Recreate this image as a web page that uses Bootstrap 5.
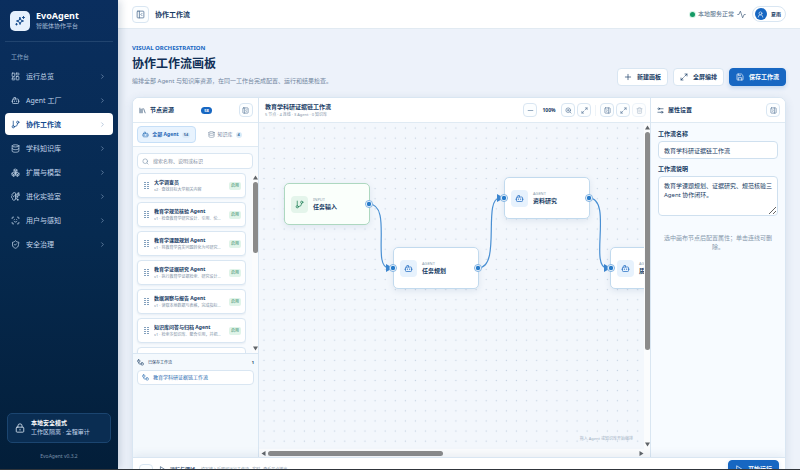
<!DOCTYPE html>
<html lang="zh-CN">
<head>
<meta charset="utf-8">
<meta name="viewport" content="width=device-width, initial-scale=1">
<title>EvoAgent 协作工作流</title>
<link href="https://cdn.jsdelivr.net/npm/bootstrap@5.3.0/dist/css/bootstrap.min.css" rel="stylesheet">
<style>
:root{--ink:#173b63;--muted:#71869f;--line:#d9e6f2;--blue:#1767c2}
body{font-family:"Noto Sans","Noto Sans CJK SC",sans-serif;font-size:6px;line-height:9px;color:var(--ink);background:#edf2fa}
button,input,textarea{font:inherit;color:inherit}
svg.ico{width:9px;height:9px;fill:none;stroke:currentColor;stroke-width:2;stroke-linecap:round;stroke-linejoin:round;flex:none}
svg.ico-s{width:7px;height:7px}
.shell{height:100vh;border-bottom:1px solid #30353b}
.side{width:118px;background:linear-gradient(#0a2e5e,#062a50 50%,#031e39);color:#c3d5ea;padding:10px 5px 8px;box-shadow:2px 0 8px #17375f33;z-index:2}
.brand{padding:0 5px 10px;border-bottom:1px solid #21446f;gap:6px}
.logo{width:20px;height:20px;border-radius:5px;background:#e6f1fd;color:#134a8c}
.logo svg.ico{width:12px;height:12px}
.brand-name{font-size:9px;line-height:12px;color:#fff}
.brand-sub{color:#a5bbd6}
.side-cap{padding:11px 6px 3px;color:#8ca7c6}
.menu{gap:2px}
.menu a{height:22px;padding:0 7px 0 6px;gap:6px;border-radius:4px;font-size:7px;color:#c3d5ea}
.menu a.active{background:#fff;color:#124b8f;font-weight:700}
.menu a .ico-s{color:#8fa9c8}
.safe{margin:0 2px;padding:5px 7px;gap:6px;border:1px solid #1b4570;border-radius:5px;background:#0a2d52}
.safe strong{color:#fff}
.safe svg.ico{width:10px;height:10px;color:#d7e4f2}
.ver{font-size:5px;color:#7890ab;padding-top:9px}
.topbar{height:29px;background:#fff;border-bottom:1px solid #e1eaf2;padding:0 14px;gap:6px}
.status{gap:3px;color:#526b87}
.sq{width:14px;height:14px;padding:0;border:1px solid var(--line);border-radius:4px;background:#fcfeff;color:#4b6c90;display:flex;align-items:center;justify-content:center;flex:none}
.sq svg.ico{width:7px;height:7px}
.sq-lg{width:17px;height:17px}
.sq-lg svg.ico{width:9px;height:9px}
.sq:disabled{opacity:.45}
.crumb{font-size:7px}
.online{width:5px;height:5px;border-radius:50%;background:#159a65;box-shadow:0 0 0 1px #d3f1e4}
.user{height:16px;padding:0 4px 0 2px;border:1px solid var(--line);border-radius:8px;background:#fff;font-size:5px}
.avatar{width:12px;height:12px;border-radius:50%;background:var(--blue);color:#fff}
.content{padding:15px 14px 0}
.eyebrow{color:var(--blue);font-weight:700}
h1.page-title{font-size:12px;line-height:16px;font-weight:700;margin:3px 0 5px;color:#102f56}
.sub{color:var(--muted)}
.acts{gap:5px}
.act{height:18px;padding:0 6px;border:1px solid var(--line);border-radius:4px;background:#fff;font-weight:700;display:flex;align-items:center;gap:5px;color:var(--ink)}
.act svg.ico{width:8px;height:8px}
.act-main{background:var(--blue);border-color:var(--blue);color:#fff;box-shadow:0 2px 4px #1767c233}
.work{margin-top:11px;border:1px solid var(--line);border-radius:7px 7px 0 0;background:#fff;box-shadow:0 2px 10px #26527e1f;overflow:hidden}
.stage{height:359px}
.left{width:126px;border-right:1px solid var(--line);background:#f8fbfe}
.right{width:135px;border-left:1px solid var(--line);background:#f7fbff}
.phead{height:25px;border-bottom:1px solid #dfeaf3;background:#fff;padding:0 5px 0 6px;flex:none}
.count{font-size:4px;line-height:7px;width:11px;border-radius:4px;background:var(--blue);color:#fff;text-align:center;font-weight:700}
.tabs{padding:3px 4px;border-bottom:1px solid #dfeaf3;background:#fff}
.tabs button{height:17px;font-size:5px;border:1px solid transparent;border-radius:4px;background:none;color:var(--muted);padding:0;gap:3px}
.tabs button.on{background:#e8f3fe;border-color:#c6dff7;color:#1c65b4;font-weight:700}
.pill{font-size:4px;line-height:6px;padding:0 2px;border-radius:3px;background:#dcebf8;font-weight:700;color:#3a6b9e}
.find{margin:6px 5px 4px 4px;height:18px;border:1px solid var(--line);border-radius:4px;background:#fff;padding:0 4px;gap:4px;color:#7990a9}
.find input{border:0;outline:0;background:none;padding:0;min-width:0;font-size:5px}
.find input::placeholder{color:#7f8d9e;opacity:1}
.list{min-height:0;overflow:hidden;gap:6px}
.cards{padding-left:4px;gap:4px;overflow:hidden}
.agent{height:25px;flex:none;border:1px solid var(--line);border-radius:4px;background:#fff;padding:0 4px 0 6px;gap:5px;box-shadow:0 1px 2px #26527e14}
.grip{width:5px;height:7px;fill:#83a0bd;flex:none}
.agent b{font-size:5px;line-height:8px;display:block}
.agent small{font-size:4px;line-height:7px;display:block;color:#8192a6}
.ok{font-size:4px;line-height:8px;padding:0 2px;border-radius:2px;background:#e0f4e9;color:#2c8360;flex:none}
.bar-v{width:6px;flex:none;background:#fbfcfd;padding:2px 0;gap:2px;align-items:center}
.bar-h{height:8px;flex:none;background:#fbfcfd;padding:0 2px;gap:2px}
.bar-v i,.bar-h i{background:#8b8b8b;border-radius:3px}
.bar-v i{width:5px}.bar-h i{height:5px}
.bar-v svg,.bar-h svg{width:5px;height:5px;fill:#606468}
.thumb-list{height:71px}.thumb-y{height:218px}.thumb-x{width:175px}
.saved{border-top:1px solid var(--line);padding:4px 4px 0;height:104px;flex:none;font-size:4px;background:#f4f9fd}
.saved a{height:15px;margin-top:3px;border:1px solid var(--line);border-radius:4px;background:#fff;padding:0 4px;gap:4px;font-size:5px;color:#286ab0}
.mid{min-width:0}
.mid .phead{padding:0 4px 0 6px}
.flow-name{font-size:6px;line-height:8px;font-weight:700}
.flow-meta{font-size:4px;line-height:7px;color:#8495a8}
.tools{gap:2px}
.tools .vr{height:11px;align-self:center;margin:0 2px;background:#bfd2e4}
.zoomv{width:20px;font-size:5px;text-align:center;font-weight:700}
.canvas{background:#f3f7fc;position:relative;overflow:hidden;min-width:0}
.canvas>svg{position:absolute;inset:0;width:100%;height:100%}
.node{position:absolute;width:86px;height:42px;border:1px solid #c2daee;border-radius:5px;background:#fff;padding:0 6px;gap:5px;box-shadow:0 2px 6px #26527e1a}
.node-in{border-color:#add8c0;background:#fafffb}
.nico{width:17px;height:17px;border-radius:4px;background:#e7f2fd;color:#2a72c4;flex:none}
.node-in .nico{background:#e4f5eb;color:#238159}
.node span{font-size:4px;line-height:6px;display:block;color:#8b9bad}
.node b{line-height:9px;display:block;white-space:nowrap}
.n1{left:25px;top:60px}.n2{left:134px;top:124px}.n3{left:245px;top:54px}.n4{left:351px;top:124px}
.hint{position:absolute;right:11px;bottom:7px;font-size:4px;line-height:7px;color:#9fb1c4}
.props{padding:7px 7px 0}
.props label{font-weight:700;display:block;line-height:9px;margin-bottom:2px}
.props .field{display:block;width:100%;border:1px solid #cfe0ef;border-radius:4px;background:#fff;padding:0 5px}
.props input.field{height:18px;margin-bottom:6px}
.props textarea.field{height:40px;padding:5px;line-height:9px;resize:vertical}
.tip{margin:18px 3px 0;text-align:center;color:#8698ac}
.dock{height:34px;border-top:1px solid var(--line);padding:2px 6px;background:#fff;box-shadow:0 -3px 8px #26527e14;position:relative}
.dock strong{font-size:5px}
.dock small{font-size:4px;color:#8293a6;padding-left:2px}
.dock-info{padding:5px 0 0 2px}
</style>
<script src="https://cdn.jsdelivr.net/npm/bootstrap@5.3.0/dist/js/bootstrap.bundle.min.js"></script>
</head>
<body>
<svg class="d-none" xmlns="http://www.w3.org/2000/svg">
<symbol id="spark" viewBox="0 0 24 24"><path d="M12 5l1.8 5.2L19 12l-5.2 1.8L12 19l-1.8-5.2L5 12l5.2-1.8zM19 3v4M17 5h4M5 17v3M3.500 18.500h3"/></symbol>
<symbol id="dash" viewBox="0 0 24 24"><rect x="3" y="3" width="7" height="9" rx="1"/><rect x="14" y="3" width="7" height="5" rx="1"/><rect x="14" y="12" width="7" height="9" rx="1"/><rect x="3" y="16" width="7" height="5" rx="1"/></symbol>
<symbol id="bot" viewBox="0 0 24 24"><path d="M12 8V4H8M2 14h2M20 14h2M15 13v2M9 13v2"/><rect x="4" y="8" width="16" height="12" rx="2"/></symbol>
<symbol id="branch" viewBox="0 0 24 24"><path d="M6 3v12M18 9a9 9 0 0 1-9 9"/><circle cx="18" cy="6" r="3"/><circle cx="6" cy="18" r="3"/></symbol>
<symbol id="db" viewBox="0 0 24 24"><ellipse cx="12" cy="5" rx="9" ry="3"/><path d="M3 5v14c0 1.700 4 3 9 3s9-1.300 9-3V5M3 12c0 1.700 4 3 9 3s9-1.300 9-3"/></symbol>
<symbol id="boxes" viewBox="0 0 24 24"><path d="M12 3l4 2.300v4.700l-4 2.300-4-2.300V5.300zM7 12l4.500 2.500v5L7 22l-4.500-2.500v-5zM17 12l4.500 2.500v5L17 22l-4.500-2.500v-5zM8 5.500l4 2 4-2M12 8v4M2.500 14.500L7 17l4.500-2.500M12.500 14.500L17 17l4.500-2.500M7 17v5M17 17v5"/></symbol>
<symbol id="brain" viewBox="0 0 24 24"><path d="M12 4a3 3 0 0 0-6 0 4 4 0 0 0-3 6 4 4 0 0 0 1 7 4 4 0 0 0 8 2zM12 13h4M12 18h4a2 2 0 0 1 2 2M12 8h8M16 8V5a2 2 0 0 1 2-2M9 10a4 4 0 0 1-3 3"/><circle cx="17" cy="13" r="1"/><circle cx="20" cy="3" r="1"/><circle cx="21" cy="8" r="1"/><circle cx="18" cy="21" r="1"/></symbol>
<symbol id="face" viewBox="0 0 24 24"><path d="M3 7V5a2 2 0 0 1 2-2h2M17 3h2a2 2 0 0 1 2 2v2M21 17v2a2 2 0 0 1-2 2h-2M7 21H5a2 2 0 0 1-2-2v-2M8 14s1.500 2 4 2 4-2 4-2M9 9v.1M15 9v.1"/></symbol>
<symbol id="shield" viewBox="0 0 24 24"><path d="M20 13c0 5-3.500 7.500-8 9-4.500-1.500-8-4-8-9V6c3 0 6-2 8-4 2 2 5 4 8 4zM9 12l2 2 4-4"/></symbol>
<symbol id="chev" viewBox="0 0 24 24"><path d="M9 18l6-6-6-6"/></symbol>
<symbol id="lock" viewBox="0 0 24 24"><rect x="3" y="10" width="18" height="12" rx="2"/><path d="M7 10V7a5 5 0 0 1 10 0v3M12 15v2"/></symbol>
<symbol id="pl" viewBox="0 0 24 24"><rect x="3" y="3" width="18" height="18" rx="2"/><path d="M9 3v18M16 15l-3-3 3-3"/></symbol>
<symbol id="pr" viewBox="0 0 24 24"><rect x="3" y="3" width="18" height="18" rx="2"/><path d="M15 3v18M8 9l3 3-3 3"/></symbol>
<symbol id="pulse" viewBox="0 0 24 24"><path d="M2 12h3l4-9 6 18 4-9h3"/></symbol>
<symbol id="person" viewBox="0 0 24 24"><circle cx="12" cy="8" r="5"/><path d="M4 21a8 8 0 0 1 16 0"/></symbol>
<symbol id="plus" viewBox="0 0 24 24"><path d="M4 12h16M12 4v16"/></symbol>
<symbol id="minus" viewBox="0 0 24 24"><path d="M4 12h16"/></symbol>
<symbol id="max" viewBox="0 0 24 24"><path d="M15 3h6v6M21 3l-7 7M3 21l7-7M9 21H3v-6"/></symbol>
<symbol id="save" viewBox="0 0 24 24"><path d="M15 3H5a2 2 0 0 0-2 2v14a2 2 0 0 0 2 2h14a2 2 0 0 0 2-2V9zM17 21v-7H7v7M7 3v5h7"/></symbol>
<symbol id="lib" viewBox="0 0 24 24"><path d="M16 6l5 14M11 6v14M7 8v12M3 4v16"/></symbol>
<symbol id="find" viewBox="0 0 24 24"><circle cx="11" cy="11" r="8"/><path d="M21 21l-4-4"/></symbol>
<symbol id="zin" viewBox="0 0 24 24"><circle cx="11" cy="11" r="8"/><path d="M21 21l-4-4M11 8v6M8 11h6"/></symbol>
<symbol id="trash" viewBox="0 0 24 24"><path d="M3 6h18M19 6v14a2 2 0 0 1-2 2H7a2 2 0 0 1-2-2V6M8 6V4a2 2 0 0 1 2-2h4a2 2 0 0 1 2 2v2M10 11v6M14 11v6"/></symbol>
<symbol id="set" viewBox="0 0 24 24"><path d="M10 6h11M3 18h10"/><circle cx="6" cy="6" r="3"/><circle cx="17" cy="18" r="3"/></symbol>
<symbol id="wf" viewBox="0 0 24 24"><rect x="2" y="3" width="8" height="8" rx="3"/><rect x="14" y="13" width="8" height="8" rx="3"/><path d="M6 11v4a2 2 0 0 0 2 2h6"/></symbol>
<symbol id="play" viewBox="0 0 24 24"><path d="M6 3l14 9-14 9z"/></symbol>
<symbol id="up" viewBox="0 0 24 24"><path d="M5 15l7-7 7 7"/></symbol>
<symbol id="grip" viewBox="0 0 5 7"><path d="M0 0h2v1H0zM3 0h2v1H3zM0 2h2v1H0zM3 2h2v1H3zM0 4h2v1H0zM3 4h2v1H3zM0 6h2v1H0zM3 6h2v1H3z"/></symbol>
<symbol id="tu" viewBox="0 0 10 10"><path d="M5 1l5 8H0z"/></symbol>
<symbol id="td" viewBox="0 0 10 10"><path d="M5 9l5-8H0z"/></symbol>
<symbol id="tl" viewBox="0 0 10 10"><path d="M1 5l8-5v10z"/></symbol>
<symbol id="tr" viewBox="0 0 10 10"><path d="M9 5L1 0v10z"/></symbol>
</svg>
<div class="shell d-flex overflow-hidden">
<aside class="side d-flex flex-column flex-shrink-0">
  <div class="brand d-flex align-items-center">
    <div class="logo d-flex align-items-center justify-content-center"><svg class="ico"><use href="#spark"/></svg></div>
    <div><div class="brand-name fw-bold">EvoAgent</div><div class="brand-sub">智能体协作平台</div></div>
  </div>
  <div class="side-cap">工作台</div>
  <nav class="menu d-flex flex-column">
    <a href="#" class="d-flex align-items-center text-decoration-none"><svg class="ico"><use href="#dash"/></svg><span class="flex-grow-1">运行总览</span><svg class="ico ico-s"><use href="#chev"/></svg></a>
    <a href="#" class="d-flex align-items-center text-decoration-none"><svg class="ico"><use href="#bot"/></svg><span class="flex-grow-1">Agent 工厂</span><svg class="ico ico-s"><use href="#chev"/></svg></a>
    <a href="#" class="active d-flex align-items-center text-decoration-none" aria-current="page"><svg class="ico"><use href="#branch"/></svg><span class="flex-grow-1">协作工作流</span><svg class="ico ico-s"><use href="#chev"/></svg></a>
    <a href="#" class="d-flex align-items-center text-decoration-none"><svg class="ico"><use href="#db"/></svg><span class="flex-grow-1">学科知识库</span><svg class="ico ico-s"><use href="#chev"/></svg></a>
    <a href="#" class="d-flex align-items-center text-decoration-none"><svg class="ico"><use href="#boxes"/></svg><span class="flex-grow-1">扩展与模型</span><svg class="ico ico-s"><use href="#chev"/></svg></a>
    <a href="#" class="d-flex align-items-center text-decoration-none"><svg class="ico"><use href="#brain"/></svg><span class="flex-grow-1">进化实验室</span><svg class="ico ico-s"><use href="#chev"/></svg></a>
    <a href="#" class="d-flex align-items-center text-decoration-none"><svg class="ico"><use href="#face"/></svg><span class="flex-grow-1">用户与感知</span><svg class="ico ico-s"><use href="#chev"/></svg></a>
    <a href="#" class="d-flex align-items-center text-decoration-none"><svg class="ico"><use href="#shield"/></svg><span class="flex-grow-1">安全治理</span><svg class="ico ico-s"><use href="#chev"/></svg></a>
  </nav>
  <div class="mt-auto">
    <div class="safe d-flex align-items-center"><svg class="ico"><use href="#lock"/></svg><div><strong class="d-block">本地安全模式</strong><span>工作区隔离 · 全程审计</span></div></div>
    <div class="ver text-center">EvoAgent v0.3.2</div>
  </div>
</aside>
<div class="flex-grow-1 d-flex flex-column overflow-hidden">
  <header class="topbar d-flex align-items-center flex-shrink-0">
    <button class="sq sq-lg" type="button" aria-label="收起导航"><svg class="ico"><use href="#pl"/></svg></button>
    <strong class="crumb">协作工作流</strong>
    <div class="status ms-auto d-flex align-items-center"><span class="online"></span><span>本地服务正常</span><svg class="ico"><use href="#pulse"/></svg></div>
    <button type="button" class="user d-flex align-items-center gap-1"><span class="avatar d-flex align-items-center justify-content-center"><svg class="ico ico-s"><use href="#person"/></svg></span><b>夏雨</b></button>
  </header>
  <main class="content">
    <div class="d-flex align-items-end justify-content-between">
      <div><div class="eyebrow">VISUAL ORCHESTRATION</div><h1 class="page-title">协作工作流画板</h1><div class="sub">编排全部 Agent 与知识库资源，在同一工作台完成配置、运行和结果检查。</div></div>
      <div class="acts d-flex">
        <button type="button" class="act"><svg class="ico"><use href="#plus"/></svg>新建画板</button>
        <button type="button" class="act"><svg class="ico"><use href="#max"/></svg>全屏编排</button>
        <button type="button" class="act act-main"><svg class="ico"><use href="#save"/></svg>保存工作流</button>
      </div>
    </div>
    <section class="work">
      <div class="stage d-flex">
        <div class="left d-flex flex-column flex-shrink-0">
          <div class="phead d-flex align-items-center gap-1"><svg class="ico ico-s"><use href="#lib"/></svg><strong>节点资源</strong><span class="count mx-auto">58</span><button type="button" class="sq" aria-label="收起资源"><svg class="ico"><use href="#pl"/></svg></button></div>
          <div class="tabs d-flex">
            <button type="button" class="on w-50 d-flex align-items-center justify-content-center"><svg class="ico ico-s"><use href="#bot"/></svg>全部 Agent<span class="pill">54</span></button>
            <button type="button" class="w-50 d-flex align-items-center justify-content-center"><svg class="ico ico-s"><use href="#db"/></svg>知识库<span class="pill">4</span></button>
          </div>
          <label class="find d-flex align-items-center"><svg class="ico ico-s"><use href="#find"/></svg><input class="flex-grow-1" type="search" placeholder="搜索名称、说明或标识" aria-label="搜索节点"></label>
          <div class="list d-flex flex-grow-1">
            <div class="cards d-flex flex-column flex-grow-1">
              <div class="agent d-flex align-items-center"><svg class="grip"><use href="#grip"/></svg><div class="flex-grow-1 overflow-hidden"><b class="text-truncate">大学调查员</b><small class="text-truncate">v2 · 查找目标大学相关内容</small></div><span class="ok">启用</span></div>
              <div class="agent d-flex align-items-center"><svg class="grip"><use href="#grip"/></svg><div class="flex-grow-1 overflow-hidden"><b class="text-truncate">教育学规范核验 Agent</b><small class="text-truncate">v1 · 检查教育学研究设计、引用、伦理…</small></div><span class="ok">启用</span></div>
              <div class="agent d-flex align-items-center"><svg class="grip"><use href="#grip"/></svg><div class="flex-grow-1 overflow-hidden"><b class="text-truncate">教育学课题规划 Agent</b><small class="text-truncate">v1 · 将教育学真实问题转化为可研究、…</small></div><span class="ok">启用</span></div>
              <div class="agent d-flex align-items-center"><svg class="grip"><use href="#grip"/></svg><div class="flex-grow-1 overflow-hidden"><b class="text-truncate">教育学证据研究 Agent</b><small class="text-truncate">v1 · 执行教育学证据检索、研究设计和…</small></div><span class="ok">启用</span></div>
              <div class="agent d-flex align-items-center"><svg class="grip"><use href="#grip"/></svg><div class="flex-grow-1 overflow-hidden"><b class="text-truncate">数据洞察与报告 Agent</b><small class="text-truncate">v1 · 读取本地数据与表格，完成指标分…</small></div><span class="ok">启用</span></div>
              <div class="agent d-flex align-items-center"><svg class="grip"><use href="#grip"/></svg><div class="flex-grow-1 overflow-hidden"><b class="text-truncate">知识库问答与归档 Agent</b><small class="text-truncate">v1 · 检索多知识库、整合引用，并把可…</small></div><span class="ok">启用</span></div>
              <div class="agent"></div>
            </div>
            <div class="bar-v d-flex flex-column"><svg><use href="#tu"/></svg><i class="thumb-list"></i><svg class="mt-auto"><use href="#td"/></svg></div>
          </div>
          <div class="saved"><div class="d-flex align-items-center gap-1"><svg class="ico ico-s"><use href="#wf"/></svg><span class="flex-grow-1">已保存工作流</span><b>1</b></div><a href="#" class="d-flex align-items-center text-decoration-none"><svg class="ico ico-s"><use href="#wf"/></svg>教育学科研证据链工作流</a></div>
        </div>
        <div class="mid d-flex flex-column flex-grow-1">
          <div class="phead d-flex align-items-center"><div class="flex-grow-1"><div class="flow-name">教育学科研证据链工作流</div><div class="flow-meta">5 节点 · 4 连线 · 3 Agent · 0 知识库</div></div>
            <div class="tools d-flex align-items-center">
              <button type="button" class="sq" aria-label="缩小"><svg class="ico"><use href="#minus"/></svg></button><span class="zoomv">100%</span>
              <button type="button" class="sq" aria-label="放大"><svg class="ico"><use href="#zin"/></svg></button>
              <button type="button" class="sq" aria-label="适应画布"><svg class="ico"><use href="#max"/></svg></button>
              <span class="vr"></span>
              <button type="button" class="sq" aria-label="属性面板"><svg class="ico"><use href="#pr"/></svg></button>
              <button type="button" class="sq" aria-label="全屏"><svg class="ico"><use href="#max"/></svg></button>
              <button type="button" class="sq" aria-label="删除" disabled><svg class="ico"><use href="#trash"/></svg></button>
            </div>
          </div>
          <div class="d-flex flex-grow-1 overflow-hidden">
            <div class="canvas flex-grow-1">
              <svg aria-hidden="true"><defs><pattern id="dots" width="10.1" height="10.1" patternUnits="userSpaceOnUse"><circle cx="5" cy="5" r=".7" fill="#c3d2e2"/></pattern><marker id="arrow" viewBox="0 0 7 8" refX="3" refY="4" markerWidth="7" markerHeight="8" markerUnits="userSpaceOnUse"><path d="M0 0l7 4-7 4z" fill="#3c86cf"/></marker></defs>
              <rect width="100%" height="100%" fill="url(#dots)"/>
              <g fill="none" stroke="#4a90d3" stroke-width="1.200" marker-end="url(#arrow)"><path d="M110 81C134 81 112 145 130 145"/><path d="M219 145C243 145 223 75 241 75"/><path d="M330 75C354 75 330 145 348 145"/></g></svg>
              <div class="node node-in n1 d-flex align-items-center"><div class="nico d-flex align-items-center justify-content-center"><svg class="ico"><use href="#branch"/></svg></div><div><span>INPUT</span><b>任务输入</b></div></div>
              <div class="node n2 d-flex align-items-center"><div class="nico d-flex align-items-center justify-content-center"><svg class="ico"><use href="#bot"/></svg></div><div><span>AGENT</span><b>任务规划</b></div></div>
              <div class="node n3 d-flex align-items-center"><div class="nico d-flex align-items-center justify-content-center"><svg class="ico"><use href="#bot"/></svg></div><div><span>AGENT</span><b>资料研究</b></div></div>
              <div class="node n4 d-flex align-items-center"><div class="nico d-flex align-items-center justify-content-center"><svg class="ico"><use href="#bot"/></svg></div><div><span>AGENT</span><b>质量核验</b></div></div>
              <svg aria-hidden="true"><g fill="#fff" stroke="#7fb2e2"><circle cx="110" cy="81" r="3.500"/><circle cx="134" cy="145" r="3.500"/><circle cx="219" cy="145" r="3.500"/><circle cx="245" cy="75" r="3.500"/><circle cx="330" cy="75" r="3.500"/><circle cx="352" cy="145" r="3.500"/></g><g fill="#287cca"><circle cx="110" cy="81" r="2.200"/><circle cx="134" cy="145" r="2.200"/><circle cx="219" cy="145" r="2.200"/><circle cx="245" cy="75" r="2.200"/><circle cx="330" cy="75" r="2.200"/><circle cx="352" cy="145" r="2.200"/></g></svg>
              <div class="hint">拖入 Agent 或知识库开始编排</div>
            </div>
            <div class="bar-v d-flex flex-column"><svg><use href="#tu"/></svg><i class="thumb-y"></i><svg class="mt-auto"><use href="#td"/></svg></div>
          </div>
          <div class="bar-h d-flex align-items-center"><svg><use href="#tl"/></svg><i class="thumb-x"></i><svg class="ms-auto me-1"><use href="#tr"/></svg></div>
        </div>
        <div class="right flex-shrink-0">
          <div class="phead d-flex align-items-center gap-1"><svg class="ico ico-s"><use href="#set"/></svg><strong class="flex-grow-1">属性设置</strong><button type="button" class="sq" aria-label="收起属性"><svg class="ico"><use href="#pr"/></svg></button></div>
          <div class="props"><label for="wname">工作流名称</label><input id="wname" class="field" type="text" value="教育学科研证据链工作流"><label for="wdesc">工作流说明</label><textarea id="wdesc" class="field">教育学课题规划、证据研究、规范核验三 Agent 协作闭环。</textarea><p class="tip">选中画布节点后配置属性；单击连线可删除。</p></div>
        </div>
      </div>
      <div class="dock d-flex align-items-start gap-1"><button type="button" class="sq mt-1" aria-label="展开"><svg class="ico"><use href="#up"/></svg></button><div class="dock-info d-flex align-items-center gap-1"><svg class="ico ico-s"><use href="#play"/></svg><strong>运行与调试</strong><small>填写输入后即可运行工作流 · 实时 · 查看节点输出</small></div><button type="button" class="act act-main ms-auto"><svg class="ico"><use href="#play"/></svg>开始运行</button></div>
    </section>
  </main>
</div>
</div>
</body>
</html>
